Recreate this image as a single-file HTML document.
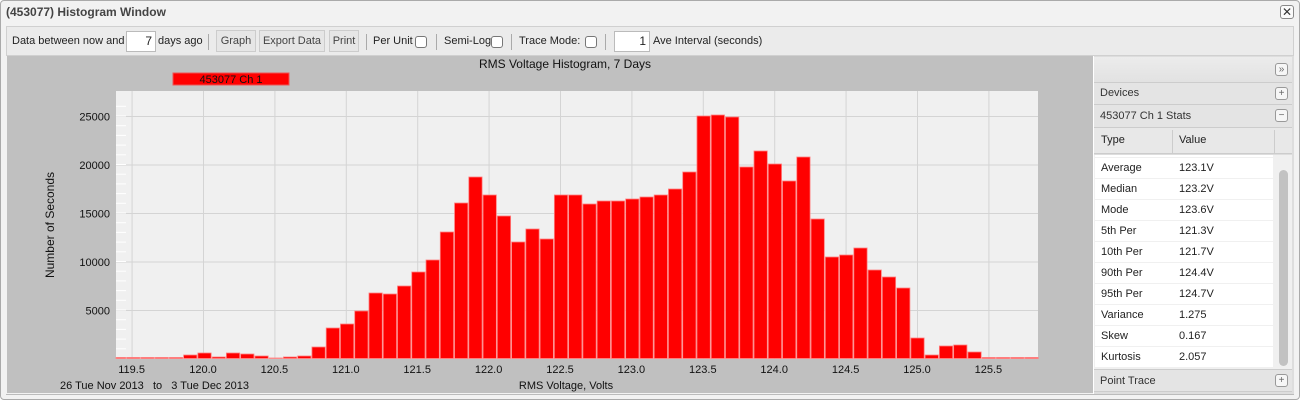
<!DOCTYPE html>
<html><head><meta charset="utf-8"><style>
*{margin:0;padding:0;box-sizing:border-box}
body{width:1300px;height:400px;background:#fff;font-family:"Liberation Sans",sans-serif;position:relative;overflow:hidden;font-size:11px;color:#222}
.a{position:absolute}
.win{left:0;top:0;width:1300px;height:400px;border:1px solid #aaa;border-radius:4px;background:#f2f2f2}
.tb{left:6px;top:26px;width:1288px;height:30px;background:#ebebeb;border:1px solid #d0d0d0}
.t{position:absolute;white-space:nowrap}
.inp{position:absolute;background:#fff;border:1px solid #bbb;text-align:right;padding-right:3px;font-size:12px;line-height:19px}
.btn{position:absolute;border:1px solid #ccc;background:#e6e6e6;height:22px;line-height:20px;text-align:center;color:#444;font-size:11px}
.sep{position:absolute;width:1px;height:16px;background:#aaa;top:34px}
.cb{position:absolute;width:12px;height:12px;border:1px solid #777;border-radius:3px;background:#fff;top:36px}
.row{position:absolute;left:1094px;width:198px;background:#e4e4e4;border-bottom:1px solid #ccc;font-size:11px;color:#333}
.ib{position:absolute;right:4px;width:13px;height:13px;border:1px solid #999;border-radius:3px;background:#f6f6f6;font-size:10px;line-height:11px;text-align:center;color:#666}
.sr{position:absolute;left:1095px;width:178px;height:20px;background:#fff;font-size:11px;line-height:20px}
</style></head><body>
<div class="a win"></div>
<div class="t" style="left:6px;top:5px;font-weight:bold;font-size:12px;color:#444">(453077) Histogram Window</div>
<div class="a" style="left:1280px;top:5px;width:14px;height:14px;border:1px solid #888;border-radius:3px;background:#fafafa;font-size:12px;line-height:12px;text-align:center;color:#333">✕</div>
<div class="a tb"></div>
<div class="t" style="left:12px;top:35px">Data between now and</div>
<div class="inp" style="left:126px;top:31px;width:30px;height:21px">7</div>
<div class="t" style="left:158px;top:35px">days ago</div>
<div class="sep" style="left:208px"></div>
<div class="btn" style="left:216px;top:30px;width:40px">Graph</div>
<div class="btn" style="left:259px;top:30px;width:66px">Export Data</div>
<div class="btn" style="left:329px;top:30px;width:30px">Print</div>
<div class="sep" style="left:366px"></div>
<div class="t" style="left:373px;top:35px">Per Unit</div><div class="cb" style="left:415px"></div>
<div class="sep" style="left:436px"></div>
<div class="t" style="left:444px;top:35px">Semi-Log</div><div class="cb" style="left:491px"></div>
<div class="sep" style="left:511px"></div>
<div class="t" style="left:519px;top:35px">Trace Mode:</div><div class="cb" style="left:585px"></div>
<div class="sep" style="left:605px"></div>
<div class="inp" style="left:614px;top:31px;width:36px;height:21px">1</div>
<div class="t" style="left:653px;top:35px">Ave Interval (seconds)</div>

<svg class="a" style="left:0;top:0" width="1300" height="400" font-family="Liberation Sans, sans-serif">
<rect x="7" y="56" width="1086" height="337" fill="#c0c0c0"/>
<text x="565" y="68" font-size="12" text-anchor="middle" fill="#111">RMS Voltage Histogram, 7 Days</text>
<rect x="173" y="73" width="116" height="12" fill="#ff0000" stroke="#e55" stroke-width="1"/>
<text x="231" y="83" font-size="11" text-anchor="middle" fill="#111">453077 Ch 1</text>
<rect x="116" y="91" width="922" height="268" fill="#f0f0f0"/>
<g id="grid" stroke="#d4d4d4" stroke-width="1"></g>
<g id="bars"></g>
<g id="lab" font-size="11" fill="#111"></g>
<text transform="translate(54,225) rotate(-90)" font-size="12" text-anchor="middle" fill="#111">Number of Seconds</text>
<text x="60" y="389" font-size="11" fill="#111">26 Tue Nov 2013 &#160; to &#160; 3 Tue Dec 2013</text>
<text x="566" y="389" font-size="11" text-anchor="middle" fill="#111">RMS Voltage, Volts</text>
</svg>
<script>
var ns="http://www.w3.org/2000/svg";
function el(p,t,a,tx){var e=document.createElementNS(ns,t);for(var k in a)e.setAttribute(k,a[k]);if(tx)e.textContent=tx;document.getElementById(p).appendChild(e);}
var vx=[131.6,203,274.4,345.8,417.2,488.6,560,631.4,702.8,774.2,845.6,917,988.4];
var vl=["119.5","120.0","120.5","121.0","121.5","122.0","122.5","123.0","123.5","124.0","124.5","125.0","125.5"];
for(var i=0;i<vx.length;i++){el("grid","line",{x1:vx[i]+.5,y1:91,x2:vx[i]+.5,y2:359});el("lab","text",{x:vx[i],y:373,"text-anchor":"middle"},vl[i]);}
var yl=["25000","20000","15000","10000","5000"];
for(var i=0;i<5;i++){var y=116.5+i*48.5;el("grid","line",{x1:116,y1:y,x2:1038,y2:y});el("lab","text",{x:110,y:y+4,"text-anchor":"end"},yl[i]);}
for(var k=1;k<27;k++){var y=358.5-k*9.7;el("grid","line",{x1:116,y1:y,x2:126,y2:y,stroke:"#fff"});}
var tops=[357.5,357.5,357.5,357.5,357.5,355,353,357,353,354,356,358,357,356,347,328,324,311,293,294,286,272,260,232,203,177,195,216,242,229,239,195,195,204,201,201,199,197,195,189,172,116,115,117,167,151,164,181,157,219,257,255,248,270,277,288,338,355,346,345,352,357.5,357.5,357.5,357.5];
for(var i=0;i<tops.length;i++){var x=112.3+i*14.26,x0=Math.max(x,116),w=x+13.3-x0;el("bars","rect",{x:x0,y:tops[i],width:w,height:358.5-tops[i],fill:"#ff0000",stroke:"#ff8080","stroke-width":0.8});}
</script>

<div class="a" style="left:1093px;top:56px;width:201px;height:338px;background:#ddd;border-left:1px solid #fff"></div>
<div class="row" style="top:57px;height:26px;background:linear-gradient(#ececec,#e2e2e2)"><div class="ib" style="top:6px">»</div></div>
<div class="row" style="top:83px;height:22px;line-height:21px;padding-left:6px">Devices<div class="ib" style="top:4px">+</div></div>
<div class="row" style="top:105px;height:23px;line-height:22px;padding-left:6px">453077 Ch 1 Stats<div class="ib" style="top:4px">−</div></div>
<div class="a" style="left:1094px;top:128px;width:198px;height:26px;background:#e8e8e8;border-bottom:1px solid #ccc"></div>
<div class="a" style="left:1172px;top:130px;width:1px;height:23px;background:#ccc"></div>
<div class="a" style="left:1274px;top:130px;width:1px;height:23px;background:#ccc"></div>
<div class="t" style="left:1101px;top:134px;font-size:11px">Type</div>
<div class="t" style="left:1179px;top:134px;font-size:11px">Value</div>
<div class="a" style="left:1094px;top:155px;width:198px;height:214px;background:#f0f0f0"></div>
<div class="sr" style="top:155px;height:2px"></div>
<div class="a" style="left:1279px;top:170px;width:9px;height:196px;border-radius:5px;background:#c2c2c2"></div>
<div class="sr" style="top:158px"><span class="t" style="left:6px">Average</span><span class="t" style="left:84px">123.1V</span></div>
<div class="sr" style="top:179px"><span class="t" style="left:6px">Median</span><span class="t" style="left:84px">123.2V</span></div>
<div class="sr" style="top:200px"><span class="t" style="left:6px">Mode</span><span class="t" style="left:84px">123.6V</span></div>
<div class="sr" style="top:221px"><span class="t" style="left:6px">5th Per</span><span class="t" style="left:84px">121.3V</span></div>
<div class="sr" style="top:242px"><span class="t" style="left:6px">10th Per</span><span class="t" style="left:84px">121.7V</span></div>
<div class="sr" style="top:263px"><span class="t" style="left:6px">90th Per</span><span class="t" style="left:84px">124.4V</span></div>
<div class="sr" style="top:284px"><span class="t" style="left:6px">95th Per</span><span class="t" style="left:84px">124.7V</span></div>
<div class="sr" style="top:305px"><span class="t" style="left:6px">Variance</span><span class="t" style="left:84px">1.275</span></div>
<div class="sr" style="top:326px"><span class="t" style="left:6px">Skew</span><span class="t" style="left:84px">0.167</span></div>
<div class="sr" style="top:347px"><span class="t" style="left:6px">Kurtosis</span><span class="t" style="left:84px">2.057</span></div>
<div class="row" style="top:369px;height:23px;line-height:22px;padding-left:6px;border-top:1px solid #ccc">Point Trace<div class="ib" style="top:4px">+</div></div>
<div class="a" style="left:6px;top:394px;width:1288px;height:1px;background:#bbb"></div>
</body></html>
